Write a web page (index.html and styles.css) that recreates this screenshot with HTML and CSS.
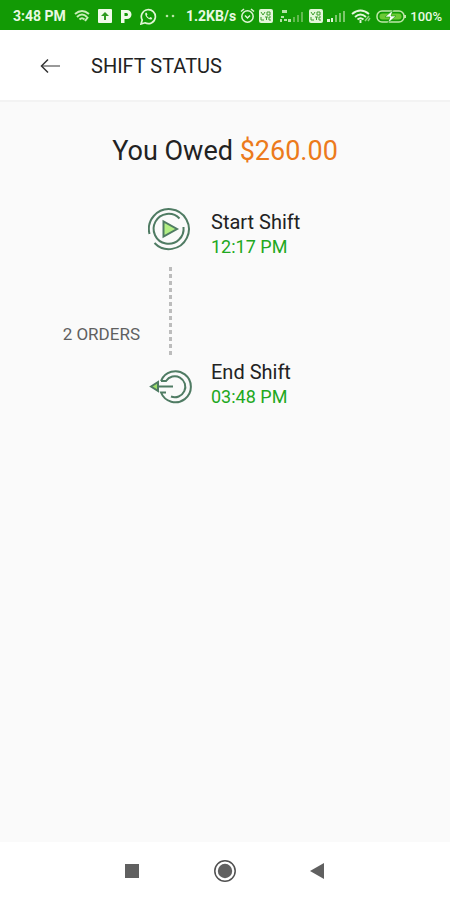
FILE: index.html
```html
<!DOCTYPE html>
<html lang="en">
<head>
<meta charset="utf-8">
<meta name="viewport" content="width=device-width, initial-scale=1">
<title>Shift Status</title>
<link rel="stylesheet" href="styles.css">
</head>
<body>
<div class="screen">
  <div class="status-bar">
    <div class="status-group status-left">
      <span class="clock">3:48 PM</span>
      <svg width="16" height="14" viewBox="0 0 16 14" fill="none" stroke="#c9edb8" stroke-width="2"><path d="M1 5Q8-1 15 5M3 8Q8 3 13 8M5.500 10.500Q8 8 10.500 10.500"/><path d="M11 12l3-4"/></svg>
      <svg width="14" height="14" viewBox="0 0 14 14"><rect width="14" height="14" rx="1" fill="#f0fbe9"/><path d="M7 3l4 4H8v4H6V7H3z" fill="#2c9b1c"/></svg>
      <svg width="12" height="14" viewBox="0 0 12 14"><path fill-rule="evenodd" d="M1 1h6a4.500 4.500 0 0 1 0 9H4.500V14H1zM4.500 4v3H6.500a1.500 1.500 0 0 0 0-3z" fill="#f0fbe9"/></svg>
      <svg width="17" height="17" viewBox="0 0 17 17" fill="none" stroke="#e0f6d5"><path d="M1 16l1.200-4A7 7 0 1 1 5 14.800z" stroke-width="1.700"/><path d="M5.500 4.800c-1.500 2.500 3 7.500 6 6.700l.8-1.500-2-1-1 1C8 9.500 7 8 6.800 7.200l.7-.7-.8-1.700z" fill="#e0f6d5" stroke="none"/></svg>
      <svg width="10" height="4" viewBox="0 0 10 4" fill="#b8e5a6"><circle cx="2" cy="2" r="1.300"/><circle cx="8" cy="2" r="1.300"/></svg>
    </div>
    <div class="status-group status-right">
      <span class="speed">1.2KB/s</span>
      <svg width="15" height="16" viewBox="0 0 15 16" fill="none" stroke="#dff5d5" stroke-width="1.500"><circle cx="7.500" cy="8.500" r="5.700"/><path d="M1 3.500L4 1M14 3.500L11 1M5 7.500l2.500 2.500L10 7.500"/></svg>
      <svg width="14" height="14" viewBox="0 0 14 14"><rect width="14" height="14" rx="2" fill="#e3f6da"/><path d="M2 3l2 3 2-3M8 3h3v3H8zM2 8v3h3M6 8h3M7.500 8v3M12 8h-2v3h2" fill="none" stroke="#3a9d2a"/></svg>
      <svg width="28" height="16" viewBox="0 0 28 16"><path d="M5 2h5v3H5zM4 8h3v2H4zM3 11h2v3H3zM7 11h3v2H7zM11 11h3v3h-3z" fill="#b5e3a6"/><path d="M16 9h2v5h-2zM20 7h2v7h-2zM24 4h2v10h-2z" fill="#62b94f"/></svg>
      <svg width="14" height="14" viewBox="0 0 14 14"><rect width="14" height="14" rx="2" fill="#e3f6da"/><path d="M2 3l2 3 2-3M8 3h3v3H8zM2 8v3h3M6 8h3M7.500 8v3M12 8h-2v3h2" fill="none" stroke="#3a9d2a"/></svg>
      <svg width="18" height="14" viewBox="0 0 18 14"><path d="M0 10h3v3H0zM4 9h2v4H4z" fill="#e3f6da"/><path d="M8 6h2v7H8zM12 4h2v9h-2zM16 2h2v11h-2z" fill="#7cc76c"/></svg>
      <svg class="wifi" width="20" height="15" viewBox="0 0 20 15" fill="none" stroke="#e3f6da" stroke-width="1.900"><path d="M1 5Q9.500-2 18 5M4 8Q9.500 3 15 8M6.500 10.500Q9.500 8 12.500 10.500"/><path d="M9.500 11v3"/><path d="M14 12l4-5M17 12l2-3" stroke="#8fd17f" stroke-width="1.500"/></svg>
      <svg width="31" height="15" viewBox="0 0 31 15"><rect x="2" y="2" width="27" height="11" rx="5" fill="none" stroke="#bfe8a9" stroke-width="1.500"/><rect x="4.500" y="4.500" width="22" height="6" rx="3" fill="#6cc935"/><path d="M30 6v3" stroke="#bfe8a9" stroke-width="2"/><path d="M18 1l-8 7h5l-2 6 8-7h-5z" fill="#fff" stroke="#129a05" stroke-width=".6"/></svg>
      <span class="percent">100%</span>
    </div>
  </div>

  <header class="app-bar">
    <button class="back" type="button" aria-label="Back">
      <svg width="22" height="18" viewBox="0 0 22 18" fill="none"><path d="M2 9h18" stroke="#777" stroke-width="1.500"/><path d="M8 2.500L1.500 9L8 15.500" stroke="#333" stroke-width="1.500"/></svg>
    </button>
    <h1 class="title">SHIFT STATUS</h1>
  </header>

  <main class="content">
    <p class="owed">You Owed <span class="amount">$260.00</span></p>
    <div class="timeline">
      <svg class="marker" width="44" height="44" viewBox="1 0 44 44" fill="none" stroke="#4f7b63" stroke-width="2"><path d="M2.500 27A20 20 0 1 1 7.500 36"/><path d="M36.500 20A15 15 0 1 1 32.500 11.500"/><path d="M16.500 14.500v15L30 22z" fill="#b2ee83"/></svg>
      <div class="event">
        <h2 class="event-name">Start Shift</h2>
        <p class="event-time">12:17 PM</p>
      </div>
      <p class="orders">2 ORDERS</p>
      <div class="line"></div>
      <svg class="marker end-marker" width="46" height="36" viewBox="-1 0 46 36" fill="none" stroke="#4f7b63" stroke-width="2"><path d="M13 12A15.500 15.500 0 1 1 13 23.500H18"/><path d="M13 12h5A10.500 10.500 0 1 1 23 27.500"/><path d="M10 17.500H25"/><path d="M3 17.500l7-4.500v9z" fill="#9fdf68"/></svg>
      <div class="event">
        <h2 class="event-name">End Shift</h2>
        <p class="event-time">03:48 PM</p>
      </div>
    </div>
  </main>

  <nav class="nav-bar" aria-label="System">
    <button type="button" aria-label="Recent apps"><svg width="24" height="24" viewBox="0 0 24 24"><path d="M5 5h14v14H5z" fill="#606060"/></svg></button>
    <button type="button" aria-label="Home"><svg width="24" height="24" viewBox="0 0 24 24"><circle cx="12" cy="12" r="10.200" fill="none" stroke="#505050" stroke-width="1.500"/><circle cx="12" cy="12" r="7.200" fill="#606060"/></svg></button>
    <button type="button" aria-label="Back"><svg width="24" height="24" viewBox="0 0 24 24"><path d="M4 12l14-8v16z" fill="#606060"/></svg></button>
  </nav>
</div>
</body>
</html>
```
FILE: styles.css
```css
* {
  box-sizing: border-box;
}

body,
h1,
h2,
p {
  margin: 0;
  font-weight: 400;
}

body {
  font-family: Roboto, "Liberation Sans", sans-serif;
  color: #222;
  background: #fafafa;
}

svg {
  display: block;
  flex: none;
}

button {
  display: block;
  padding: 0;
  border: 0;
  background: none;
}

.screen {
  display: flex;
  flex-direction: column;
  min-height: 100vh;
}

.status-bar {
  display: flex;
  justify-content: space-between;
  align-items: center;
  height: 30px;
  padding: 2px 8px 0 13px;
  background: #129a05;
  color: #e9f9e2;
  font-size: 14px;
  white-space: nowrap;
}

.status-group {
  display: flex;
  align-items: center;
}

.status-left {
  gap: 8px;
}

.status-right {
  gap: 4px;
}

.clock,
.speed {
  font-weight: 700;
}

.percent {
  font-size: 13px;
  font-weight: 500;
}

.wifi {
  margin-left: 2px;
}

.app-bar {
  display: flex;
  align-items: center;
  gap: 29px;
  height: 72px;
  padding: 2px 40px 0;
  background: #fff;
  border-bottom: 2px solid #f3f3f3;
}

.title {
  font-size: 20px;
  line-height: 24px;
}

.content {
  flex: 1;
  padding-top: 32px;
}

.owed {
  font-size: 27px;
  line-height: 34px;
  text-align: center;
}

.amount {
  color: #ec7a1c;
}

.timeline {
  display: grid;
  grid-template-columns: 140px 60px 1fr;
  margin-top: 39px;
}

.marker {
  grid-column: 2;
  justify-self: center;
  align-self: start;
}

.end-marker {
  margin-top: 12px;
}

.event {
  padding: 2px 0 0 11px;
}

.event-name {
  font-size: 20px;
  line-height: 26px;
}

.event-time {
  font-size: 18px;
  line-height: 24px;
  color: #20a820;
}

.orders {
  grid-column: 1;
  align-self: end;
  padding-bottom: 12px;
  text-align: right;
  font-size: 17px;
  line-height: 22px;
  color: #606060;
}

.line {
  justify-self: center;
  width: 3px;
  height: 88px;
  margin: 8px 0 2px;
  background: repeating-linear-gradient(#bcbcbc 0 4px, transparent 4px 7px);
}

.nav-bar {
  display: flex;
  justify-content: center;
  align-items: center;
  gap: 69px;
  height: 58px;
  background: #fff;
}
```
